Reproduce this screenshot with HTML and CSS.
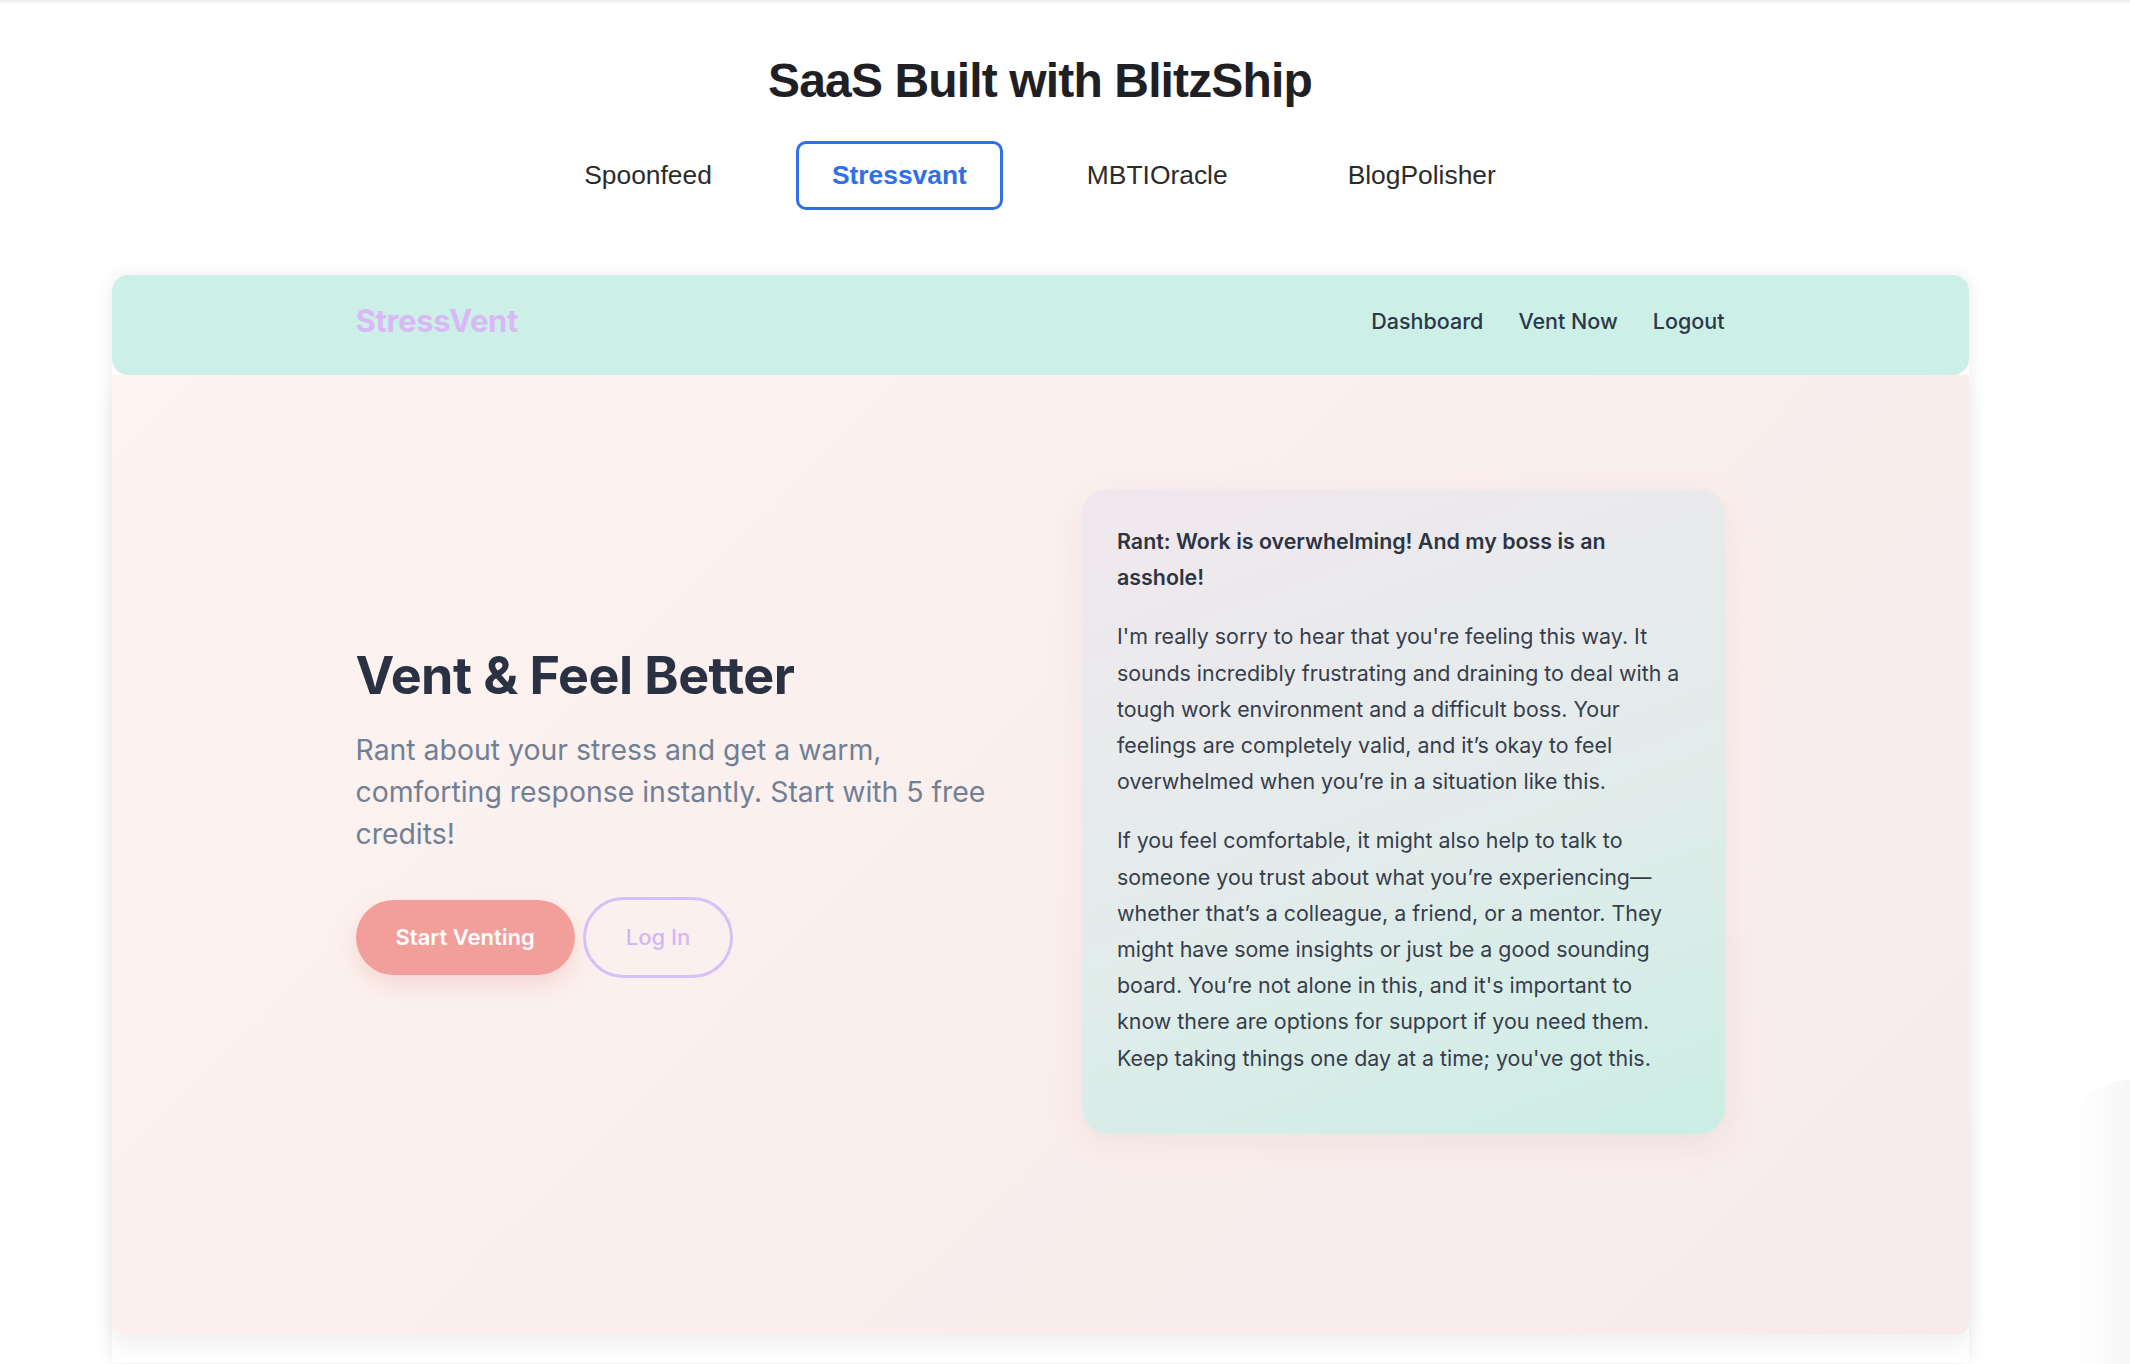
FILE: index.html
```html
<!DOCTYPE html>
<html lang="en">
<head>
<meta charset="utf-8">
<title>SaaS Built with BlitzShip</title>
<link rel="stylesheet" href="styles.css">
</head>
<body>
<div class="topline"></div>
<div class="page">
  <h1 class="title">SaaS Built with BlitzShip</h1>
  <nav class="tabs">
    <a class="tab">Spoonfeed</a>
    <a class="tab active">Stressvant</a>
    <a class="tab">MBTIOracle</a>
    <a class="tab">BlogPolisher</a>
  </nav>
  <div class="frame">
    <header class="appnav">
      <div class="inner navrow">
        <div class="logo">StressVent</div>
        <div class="links">
          <a>Dashboard</a>
          <a>Vent Now</a>
          <a>Logout</a>
        </div>
      </div>
    </header>
    <section class="hero">
      <div class="inner herogrid">
        <div class="herotext">
          <h2>Vent &amp; Feel Better</h2>
          <p class="sub">Rant about your stress and get a warm, comforting response instantly. Start with 5 free credits!</p>
          <div class="buttons">
            <a class="btn primary">Start Venting</a>
            <a class="btn outline">Log In</a>
          </div>
        </div>
        <div class="response">
          <p class="rant">Rant: Work is overwhelming! And my boss is an asshole!</p>
          <p>I'm really sorry to hear that you're feeling this way. It sounds incredibly frustrating and draining to deal with a tough work environment and a difficult boss. Your feelings are completely valid, and it’s okay to feel overwhelmed when you’re in a situation like this.</p>
          <p>If you feel comfortable, it might also help to talk to someone you trust about what you’re experiencing—whether that’s a colleague, a friend, or a mentor. They might have some insights or just be a good sounding board. You’re not alone in this, and it's important to know there are options for support if you need them. Keep taking things one day at a time; you've got this.</p>
        </div>
      </div>
    </section>
    <div class="below"></div>
  </div>
</div>
<div class="edgeshadow"></div>
</body>
</html>
```

FILE: styles.css
```css
html, body {
  margin: 0;
  padding: 0;
  background: #ffffff;
}

body {
  font-family: "Liberation Sans", Arial, sans-serif;
  height: 1364px;
  overflow: hidden;
  position: relative;
}

.topline {
  height: 4px;
  background: linear-gradient(to bottom, #e9e9e9, #ffffff);
}

.page {
  width: 2080px;
  display: flex;
  flex-direction: column;
  align-items: center;
}

.title {
  margin: 53px 0 0;
  font-size: 48px;
  line-height: 48px;
  font-weight: 700;
  letter-spacing: -0.018em;
  color: #1f2023;
}

.tabs {
  display: flex;
  gap: 48px;
  margin-top: 36px;
}

.tab {
  display: block;
  font-size: 26.4px;
  line-height: 31px;
  padding: 16px 33px;
  border: 3px solid transparent;
  border-radius: 10px;
  color: #2b2b2b;
}

.tab.active {
  border-color: #2f6fe8;
  color: #2f6fe8;
  font-weight: 700;
}

.frame {
  margin-top: 65px;
  width: 1857px;
  background: #ffffff;
  box-shadow: 0 0 18px rgba(0, 0, 0, 0.08);
  font-family: Inter, "Noto Sans", sans-serif;
  border-radius: 16px 16px 0 0;
}

.inner {
  width: 1369px;
  margin: 0 auto;
}

.appnav {
  background: #ccefe7;
  border-radius: 16px;
  height: 100px;
  box-sizing: border-box;
  padding-bottom: 9px;
  display: flex;
  align-items: center;
  position: relative;
  z-index: 1;
}

.navrow {
  display: flex;
  justify-content: space-between;
  align-items: center;
}

.logo {
  font-size: 31px;
  font-weight: 700;
  color: #d8b9f6;
  letter-spacing: -0.01em;
}

.links {
  display: flex;
  gap: 35px;
}

.links a {
  font-size: 21.5px;
  font-weight: 500;
  color: #2d3748;
}

.hero {
  background: linear-gradient(135deg, #fdf4f0 0%, #faefed 50%, #f7eaeb 100%);
  padding: 114px 0 201px;
  border-radius: 0 0 12px 12px;
  box-shadow: 0 12px 22px rgba(0, 0, 0, 0.06);
}

.herogrid {
  display: grid;
  grid-template-columns: 1fr 1fr;
  column-gap: 84px;
  align-items: center;
}

.herotext h2 {
  margin: 0;
  font-size: 52px;
  line-height: 62px;
  font-weight: 700;
  color: #2a3142;
  letter-spacing: -0.01em;
}

.sub {
  margin: 22px 0 0;
  font-size: 28.4px;
  line-height: 42px;
  color: #718096;
}

.buttons {
  margin-top: 42px;
  display: flex;
  align-items: center;
  gap: 8px;
}

.btn {
  display: block;
  font-size: 22px;
  line-height: 33px;
  font-weight: 600;
  padding: 21px 40px;
  border-radius: 999px;
}

.btn.primary {
  background: #f29e9b;
  color: #ffffff;
  box-shadow: 0 10px 22px rgba(240, 150, 145, 0.28);
}

.btn.outline {
  border: 3px solid #d6c0f7;
  color: #d2b6f6;
  font-weight: 500;
}

.response {
  background: linear-gradient(160deg, #f1e8ee 0%, #e2ecea 55%, #cbeee4 100%);
  border-radius: 26px;
  padding: 34px 35px 35px;
  box-shadow: 0 10px 30px rgba(200, 160, 160, 0.16);
  color: #363d4c;
  font-size: 21.4px;
  line-height: 36.2px;
}

.response p {
  margin: 0 0 23px;
}

.response .rant {
  font-weight: 600;
  color: #2d3443;
}

.below {
  height: 28px;
}

.edgeshadow {
  position: absolute;
  right: 0;
  top: 1080px;
  width: 64px;
  height: 284px;
  background: linear-gradient(to right, rgba(0, 0, 0, 0) 0%, rgba(0, 0, 0, 0.015) 60%, rgba(0, 0, 0, 0.035) 100%);
  border-top-left-radius: 64px;
}
```
